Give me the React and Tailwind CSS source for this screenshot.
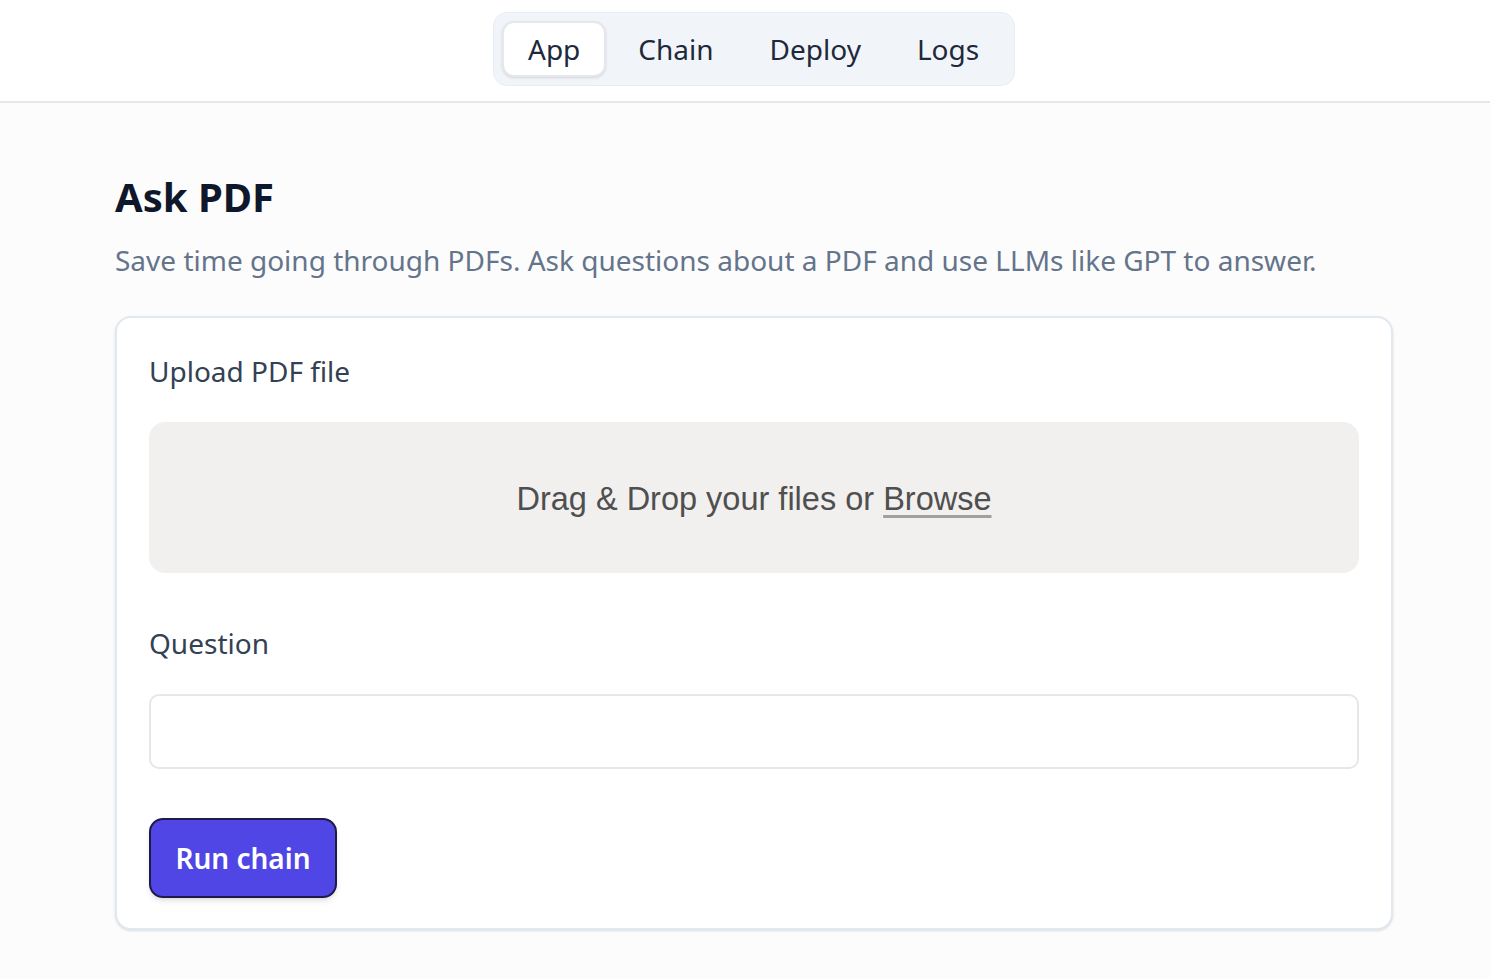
export default function App() {
  const tabs = ["App", "Chain", "Deploy", "Logs"];
  return (
    <div className="min-h-[978px] bg-[#fcfcfc]" style={{ fontFamily: '"Noto Sans", sans-serif' }}>
      <header className="h-[103px] bg-white border-b-2 border-[#e5e7eb] flex justify-center pt-[12px] pl-[18px]">
        <div className="h-[74px] w-[522px] rounded-[14px] bg-[#f1f5f9] border border-[#e8edf3] p-[8px] flex gap-[8px]">
          {tabs.map((t, i) => (
            <div
              key={t}
              className={
                i === 0
                  ? "h-[56px] px-[24px] flex items-center rounded-[12px] bg-white border-2 border-[#e5e7eb] shadow-sm text-[28px] text-[#1e293b]"
                  : "h-[56px] px-[24px] flex items-center rounded-[12px] text-[28px] text-[#1e293b]"
              }
            >
              {t}
            </div>
          ))}
        </div>
      </header>
      <main className="ml-[115px] w-[1278px] pt-[64px]">
        <h1 className="text-[40px] leading-[60px] font-bold text-[#0f172a]">Ask PDF</h1>
        <p className="mt-[12px] text-[28px] leading-[42px] text-[#64748b]">
          Save time going through PDFs. Ask questions about a PDF and use LLMs like GPT to answer.
        </p>
        <section className="mt-[35px] h-[614px] rounded-[16px] border-2 border-[#e2e8f0] bg-white shadow-sm px-[32px] pt-[32px]">
          <div className="text-[28px] leading-[42px] text-[#334155]">Upload PDF file</div>
          <div className="mt-[30px] h-[151px] rounded-[16px] bg-[#f1f0ef] flex items-center justify-center">
            <span
              className="text-[32.5px] text-[#4f4f4f] pt-[3px]"
              style={{ fontFamily: '"Liberation Sans", Arial, sans-serif' }}
            >
              Drag &amp; Drop your files or{" "}
              <span className="underline decoration-[#a0a0a0] decoration-[3px] underline-offset-[5px]">Browse</span>
            </span>
          </div>
          <div className="mt-[49px] text-[28px] leading-[42px] text-[#334155]">Question</div>
          <div className="mt-[30px] h-[75px] rounded-[10px] border-2 border-[#e5e7eb] bg-white"></div>
          <button className="mt-[49px] h-[80px] w-[188px] rounded-[14px] bg-[#4f46e5] border-2 border-[#1e1b4b] shadow-md text-white text-[28px] font-semibold">
            Run chain
          </button>
        </section>
      </main>
    </div>
  );
}
